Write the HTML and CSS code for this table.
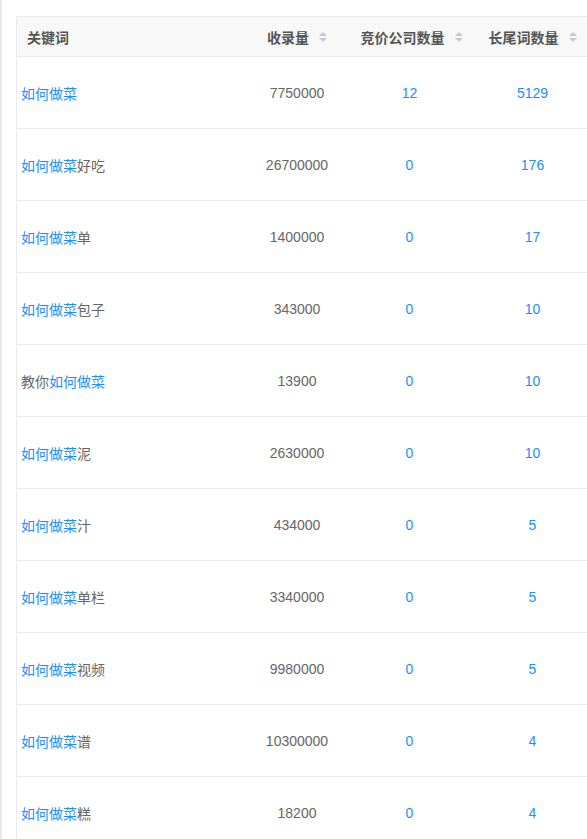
FILE: index.html
```html
<!DOCTYPE html>
<html lang="zh">
<head>
<meta charset="utf-8">
<link rel="stylesheet" href="styles.css">
</head>
<body>
<div class="page">
  <table class="kw-table">
    <colgroup>
      <col class="c1"><col class="c2"><col class="c3"><col class="c4">
    </colgroup>
    <thead>
      <tr>
        <th class="th-left">关键词</th>
        <th><span class="th-inner">收录量<span class="sort"><i class="up"></i><i class="down"></i></span></span></th>
        <th><span class="th-inner">竞价公司数量<span class="sort"><i class="up"></i><i class="down"></i></span></span></th>
        <th><span class="th-inner">长尾词数量<span class="sort"><i class="up"></i><i class="down"></i></span></span></th>
      </tr>
    </thead>
    <tbody>
      <tr><td class="kw"><span class="hl">如何做菜</span></td><td>7750000</td><td class="blue">12</td><td class="blue">5129</td></tr>
      <tr><td class="kw"><span class="hl">如何做菜</span>好吃</td><td>26700000</td><td class="blue">0</td><td class="blue">176</td></tr>
      <tr><td class="kw"><span class="hl">如何做菜</span>单</td><td>1400000</td><td class="blue">0</td><td class="blue">17</td></tr>
      <tr><td class="kw"><span class="hl">如何做菜</span>包子</td><td>343000</td><td class="blue">0</td><td class="blue">10</td></tr>
      <tr><td class="kw">教你<span class="hl">如何做菜</span></td><td>13900</td><td class="blue">0</td><td class="blue">10</td></tr>
      <tr><td class="kw"><span class="hl">如何做菜</span>泥</td><td>2630000</td><td class="blue">0</td><td class="blue">10</td></tr>
      <tr><td class="kw"><span class="hl">如何做菜</span>汁</td><td>434000</td><td class="blue">0</td><td class="blue">5</td></tr>
      <tr><td class="kw"><span class="hl">如何做菜</span>单栏</td><td>3340000</td><td class="blue">0</td><td class="blue">5</td></tr>
      <tr><td class="kw"><span class="hl">如何做菜</span>视频</td><td>9980000</td><td class="blue">0</td><td class="blue">5</td></tr>
      <tr><td class="kw"><span class="hl">如何做菜</span>谱</td><td>10300000</td><td class="blue">0</td><td class="blue">4</td></tr>
      <tr><td class="kw"><span class="hl">如何做菜</span>糕</td><td>18200</td><td class="blue">0</td><td class="blue">4</td></tr>
    </tbody>
  </table>
</div>
</body>
</html>
```
FILE: styles.css
```css
html, body {
  margin: 0;
  padding: 0;
  overflow: hidden;
  background: #fff;
}
body {
  font-family: "Liberation Sans", Arial, "Noto Sans CJK SC", sans-serif;
  font-size: 14px;
  color: #666;
}
.page {
  border-left: 2px solid #e8e8e8;
  padding: 16px 0 0 14px;
  min-height: 900px;
  width: 640px;
}
.kw-table {
  border-collapse: collapse;
  table-layout: fixed;
  width: 590px;
  border-left: 1px solid #e8eaec;
  border-top: 1px solid #e8eaec;
}
.c1 { width: 217px; }
.c2 { width: 127px; }
.c3 { width: 98px; }
.c4 { width: 148px; }
thead th {
  background: #f8f8f9;
  height: 39px;
  padding: 0;
  font-weight: bold;
  color: #555;
  text-align: center;
  border-bottom: 1px solid #e8eaec;
  white-space: nowrap;
}
.th-left {
  text-align: left;
  padding-left: 10px;
}
.th-inner {
  display: inline-flex;
  align-items: center;
  gap: 10px;
}
.sort {
  display: inline-flex;
  flex-direction: column;
  gap: 2px;
}
.sort i {
  display: block;
  width: 0;
  height: 0;
  border-left: 4px solid transparent;
  border-right: 4px solid transparent;
}
.sort .up { border-bottom: 4px solid #c5c8ce; }
.sort .down { border-top: 4px solid #c5c8ce; }
tbody td {
  height: 71px;
  padding: 0;
  text-align: center;
  border-bottom: 1px solid #e8eaec;
  white-space: nowrap;
}
tbody td.kw {
  text-align: left;
  padding-left: 4px;
}
.hl, .blue {
  color: #1890ff;
}
```
